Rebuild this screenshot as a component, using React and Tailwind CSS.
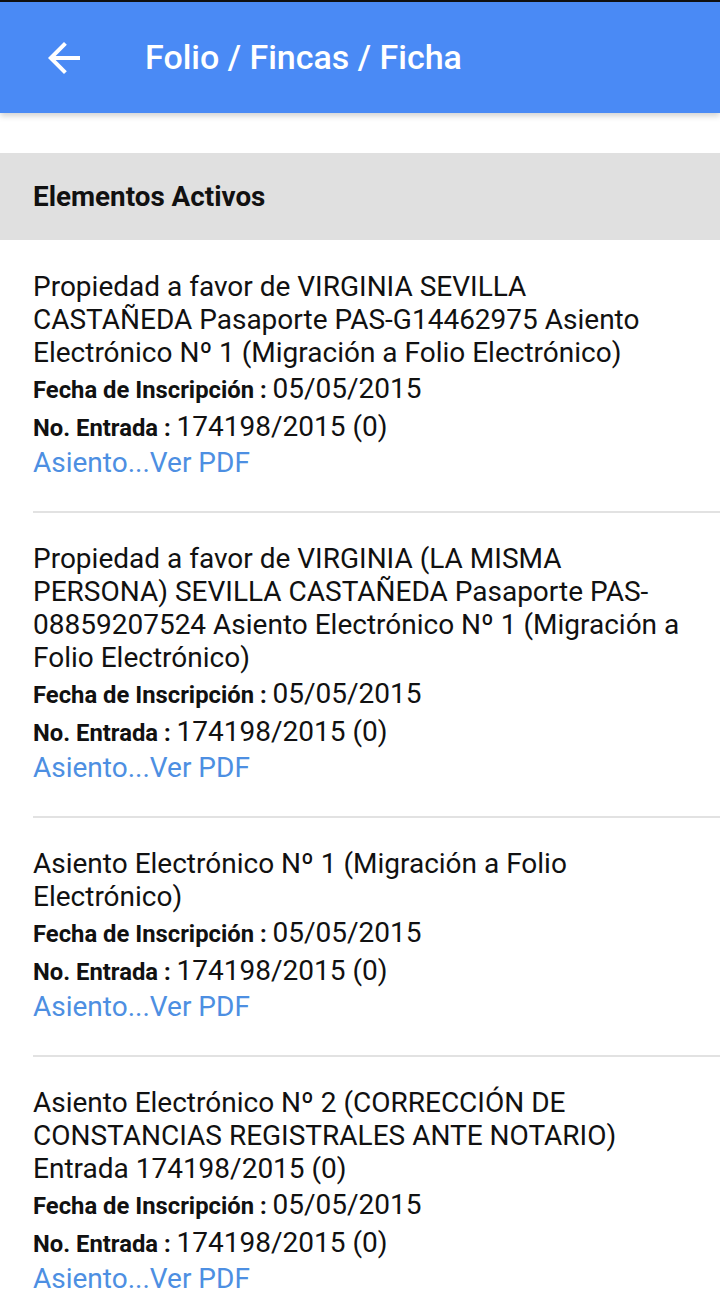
import React from 'react'

const items = [
  {
    text: 'Propiedad a favor de VIRGINIA SEVILLA CASTAÑEDA Pasaporte PAS-G14462975 Asiento Electrónico Nº 1 (Migración a Folio Electrónico)',
    fecha: '05/05/2015',
    entrada: '174198/2015 (0)',
  },
  {
    text: 'Propiedad a favor de VIRGINIA (LA MISMA PERSONA) SEVILLA CASTAÑEDA Pasaporte PAS-08859207524 Asiento Electrónico Nº 1 (Migración a Folio Electrónico)',
    fecha: '05/05/2015',
    entrada: '174198/2015 (0)',
  },
  {
    text: 'Asiento Electrónico Nº 1 (Migración a Folio Electrónico)',
    fecha: '05/05/2015',
    entrada: '174198/2015 (0)',
  },
  {
    text: 'Asiento Electrónico Nº 2 (CORRECCIÓN DE CONSTANCIAS REGISTRALES ANTE NOTARIO) Entrada 174198/2015 (0)',
    fecha: '05/05/2015',
    entrada: '174198/2015 (0)',
  },
]

const Meta = ({ label, value, h }) => (
  <div className={`flex items-center ${h}`}>
    <p className="leading-none text-[#111]">
      <span className="text-[23.8px] font-bold">{label} : </span>
      <span className="text-[28px]">{value}</span>
    </p>
  </div>
)

const Item = ({ item, first, last }) => (
  <div className="pl-[33px]">
    <div
      className={`pr-[36px] pb-[30px] ${first ? 'pt-[30px]' : 'pt-[29px]'} ${last ? '' : 'border-b-2 border-[#e2e2e2]'}`}
    >
      <p className="text-[28px] leading-[33px] text-[#111]">{item.text}</p>
      <Meta label="Fecha de Inscripción" value={item.fecha} h="h-[40px]" />
      <Meta label="No. Entrada" value={item.entrada} h="h-[36px]" />
      <div className="h-[36px] flex items-center">
        <a className="text-[28px] leading-none text-[#4d8fe2]">Asiento...Ver PDF</a>
      </div>
    </div>
  </div>
)

export default function App() {
  return (
    <div className="w-[720px] min-h-[1315px] bg-white font-['Roboto',sans-serif] overflow-hidden">
      <div className="h-[2px] bg-[#111]" />
      <header className="relative z-10 h-[111px] bg-[#4a8af5] flex items-center shadow-[0_3px_6px_rgba(0,0,0,0.18)]">
        <button className="ml-[40px] w-[48px] h-[48px] flex items-center justify-center">
          <svg width="48" height="48" viewBox="0 0 24 24" fill="#fff">
            <path d="M20 11H7.83l5.59-5.59L12 4l-8 8 8 8 1.41-1.41L7.83 13H20v-2z" />
          </svg>
        </button>
        <h1 className="ml-[57px] text-white text-[34px] font-medium">Folio / Fincas / Ficha</h1>
      </header>
      <div className="h-[40px]" />
      <div className="h-[87px] bg-[#e0e0e0] flex items-center px-[33px]">
        <h2 className="text-[27.8px] font-bold text-[#111]">Elementos Activos</h2>
      </div>
      {items.map((item, i) => (
        <Item key={i} item={item} first={i === 0} last={i === items.length - 1} />
      ))}
    </div>
  )
}
